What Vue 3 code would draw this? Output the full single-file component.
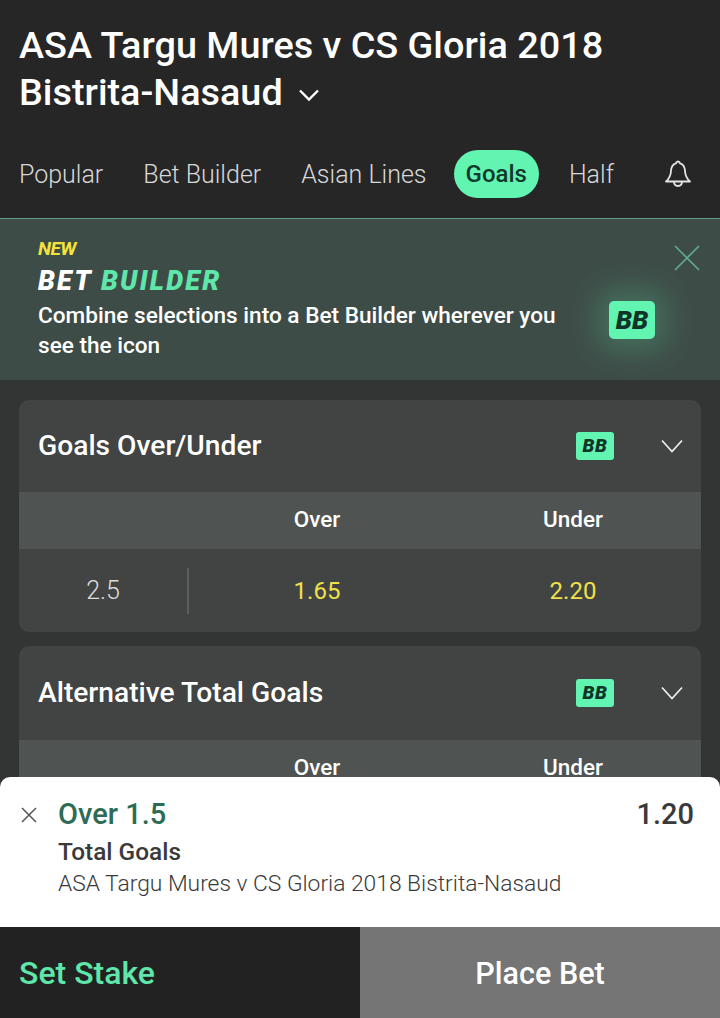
<script setup>
const tabs = ["Popular", "Bet Builder", "Asian Lines", "Goals", "Half"];
</script>

<template>
  <div class="screen">
    <header class="top">
      <h1 class="title">
        ASA Targu Mures v CS Gloria 2018<br />
        Bistrita-Nasaud
        <svg class="title-chevron" width="22" height="14" viewBox="0 0 22 14">
          <path d="M2 2.500 11 11.500 20 2.500" fill="none" stroke="#fff" stroke-width="2.400" />
        </svg>
      </h1>
      <nav class="tabs">
        <span v-for="tab in tabs" :key="tab" class="tab" :class="{ active: tab === 'Goals' }">{{ tab }}</span>
        <svg class="bell" width="28" height="30" viewBox="0 0 28 30">
          <path
            d="M14 2.500c-1.200 0-1.800.8-2 1.800C8.800 5.200 7.200 8.500 7 12c-.2 4.500-1 7-5 10.500h24c-4-3.500-4.800-6-5-10.500-.2-3.500-1.800-6.800-5-7.700-.2-1-.8-1.800-2-1.800z"
            fill="none"
            stroke="#e4e4e4"
            stroke-width="1.800"
            stroke-linejoin="round"
          />
          <path d="M10 22.500c0 2.800 1.700 4.500 4 4.500s4-1.700 4-4.500" fill="none" stroke="#e4e4e4" stroke-width="1.800" />
        </svg>
      </nav>
    </header>

    <section class="promo">
      <div class="promo-text">
        <div class="promo-new">NEW</div>
        <div class="promo-title">BET <span>BUILDER</span></div>
        <p class="promo-body">Combine selections into a Bet Builder wherever you see the icon</p>
      </div>
      <div class="promo-badge">BB</div>
      <svg class="promo-close" width="26" height="26" viewBox="0 0 26 26">
        <path d="M1 1 25 25M25 1 1 25" stroke="#5fae90" stroke-width="1.600" fill="none" />
      </svg>
    </section>

    <main class="markets">
      <section class="card">
        <div class="card-head">
          <h2>Goals Over/Under</h2>
          <span class="bb">BB</span>
          <svg class="chevron" width="22" height="14" viewBox="0 0 22 14">
            <path d="M1 1.500 11 12.500 21 1.500" fill="none" stroke="#eee" stroke-width="1.700" />
          </svg>
        </div>
        <div class="cols">
          <span></span>
          <span>Over</span>
          <span>Under</span>
        </div>
        <div class="odds">
          <span class="line">2.5</span>
          <span class="price">1.65</span>
          <span class="price">2.20</span>
        </div>
      </section>

      <section class="card">
        <div class="card-head tall">
          <h2>Alternative Total Goals</h2>
          <span class="bb">BB</span>
          <svg class="chevron" width="22" height="14" viewBox="0 0 22 14">
            <path d="M1 1.500 11 12.500 21 1.500" fill="none" stroke="#eee" stroke-width="1.700" />
          </svg>
        </div>
        <div class="cols">
          <span></span>
          <span>Over</span>
          <span>Under</span>
        </div>
      </section>
    </main>

    <div class="betslip">
      <div class="slip">
        <svg class="slip-x" width="18" height="18" viewBox="0 0 18 18">
          <path d="M2 2 16 16M16 2 2 16" stroke="#555" stroke-width="1.500" fill="none" />
        </svg>
        <div class="slip-info">
          <div class="slip-pick">Over 1.5</div>
          <div class="slip-market">Total Goals</div>
          <div class="slip-event">ASA Targu Mures v CS Gloria 2018 Bistrita-Nasaud</div>
        </div>
        <div class="slip-price">1.20</div>
      </div>
      <div class="actions">
        <div class="set-stake">Set Stake</div>
        <div class="place-bet">Place Bet</div>
      </div>
    </div>
  </div>
</template>

<style>
html,
body {
  margin: 0;
  background: #333;
}
</style>

<style scoped>
.screen {
  position: relative;
  width: 720px;
  height: 1018px;
  overflow: hidden;
  background: #333534;
  font-family: Roboto, "Liberation Sans", sans-serif;
  color: #fff;
}

.top {
  height: 218px;
  box-sizing: border-box;
  background: #262626;
  padding: 22px 19px 0;
}

.title {
  margin: 0;
  font-size: 37.800px;
  line-height: 47px;
  font-weight: 500;
}

.title-chevron {
  margin-left: 6px;
  vertical-align: 3px;
}

.tabs {
  display: flex;
  align-items: center;
  margin-top: 34px;
  height: 48px;
  font-size: 25px;
  color: #d8d8d8;
}

.tab {
  margin-right: 40px;
  font-weight: 300;
}

.tab.active {
  margin: 0 30px 0 -13px;
  padding: 0 12px;
  height: 48px;
  line-height: 48px;
  border-radius: 24px;
  background: #62f5b2;
  color: #123a2c;
  font-size: 24px;
  font-weight: 500;
}

.bell {
  margin-left: 10px;
}

.promo {
  position: relative;
  display: flex;
  height: 162px;
  box-sizing: border-box;
  border-top: 1px solid #5f9d85;
  background: #3e4c47;
  padding: 19px 38px 0;
}

.promo-text {
  width: 530px;
}

.promo-new {
  font-size: 19px;
  line-height: 22px;
  font-weight: 700;
  font-style: italic;
  color: #f5e33c;
  letter-spacing: -0.5px;
}

.promo-title {
  margin-top: 4px;
  font-size: 27px;
  line-height: 34px;
  font-weight: 900;
  font-style: italic;
  letter-spacing: 2.200px;
}

.promo-title span {
  color: #5fe6ab;
}

.promo-body {
  margin: 3px 0 0;
  font-size: 22.600px;
  line-height: 30px;
  font-weight: 500;
}

.promo-badge {
  margin: 63px 0 0 41px;
  width: 46px;
  height: 38px;
  line-height: 38px;
  text-align: center;
  border-radius: 5px;
  background: #62f5b2;
  color: #103428;
  font-size: 26px;
  font-weight: 900;
  font-style: italic;
  box-shadow: 0 0 30px 12px rgba(94, 240, 176, 0.22);
}

.promo-close {
  position: absolute;
  top: 26px;
  right: 20px;
}

.markets {
  padding: 20px 19px 0;
}

.card {
  margin-bottom: 14px;
  border-radius: 10px;
  background: #414443;
  overflow: hidden;
}

.card-head {
  display: flex;
  align-items: center;
  height: 92px;
  padding: 0 18px 0 19px;
}

.card-head.tall {
  height: 94px;
}

.card-head h2 {
  flex: 1;
  margin: 0 0 2px;
  font-size: 28.200px;
  font-weight: 500;
}

.bb {
  width: 38px;
  height: 28px;
  line-height: 28px;
  text-align: center;
  border-radius: 3px;
  background: #62f5b2;
  color: #103428;
  font-size: 19px;
  font-weight: 900;
  font-style: italic;
  letter-spacing: 0.5px;
}

.chevron {
  margin-left: 47px;
}

.cols,
.odds {
  display: grid;
  grid-template-columns: 170px 1fr 1fr;
  align-items: center;
  text-align: center;
}

.cols {
  height: 57px;
  padding-bottom: 4px;
  box-sizing: border-box;
  background: #4f5352;
  font-size: 22.500px;
  font-weight: 500;
}

.odds {
  height: 83px;
  font-size: 24px;
}

.line {
  height: 46px;
  line-height: 46px;
  border-right: 2px solid #5a5e5d;
  color: #ddd;
  font-size: 25px;
  font-weight: 300;
}

.price {
  color: #f0e04a;
}

.betslip {
  position: absolute;
  left: 0;
  right: 0;
  bottom: 0;
}

.slip {
  display: flex;
  align-items: flex-start;
  height: 150px;
  box-sizing: border-box;
  padding: 20px 26px 0 20px;
  border-radius: 10px 10px 0 0;
  background: #fff;
  color: #3a3a3a;
}

.slip-x {
  margin-top: 9px;
}

.slip-info {
  flex: 1;
  margin-left: 20px;
}

.slip-pick {
  font-size: 29px;
  line-height: 34px;
  font-weight: 500;
  color: #2e6b54;
}

.slip-market {
  margin-top: 5px;
  font-size: 24.400px;
  line-height: 32px;
  font-weight: 500;
}

.slip-event {
  font-size: 22.800px;
  line-height: 32px;
  font-weight: 300;
}

.slip-price {
  font-size: 29px;
  line-height: 34px;
  font-weight: 500;
}

.actions {
  display: grid;
  grid-template-columns: 1fr 1fr;
  height: 91px;
  line-height: 93px;
  font-weight: 500;
}

.set-stake {
  padding-left: 19px;
  background: #222;
  color: #5fe6ab;
  font-size: 32px;
}

.place-bet {
  background: #757575;
  text-align: center;
  font-size: 30.500px;
}
</style>
